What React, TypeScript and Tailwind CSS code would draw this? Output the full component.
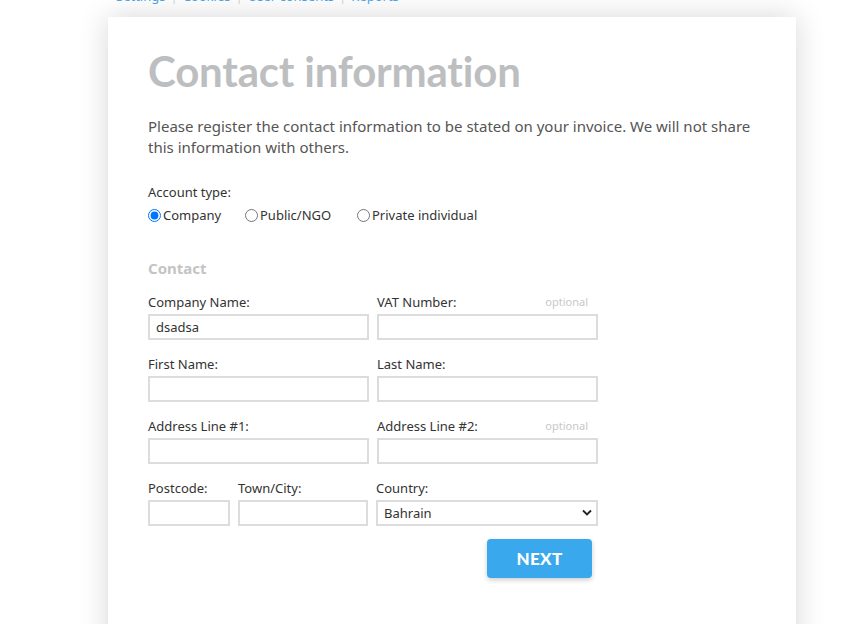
import React from "react";

const navLinks = ["Settings", "Cookies", "User consents", "Reports"];

function Field({
  label,
  optional,
  value,
  width,
}: {
  label: string;
  optional?: boolean;
  value?: string;
  width: string;
}) {
  return (
    <div className={`flex flex-col ${width}`}>
      <div className="flex items-center justify-between pr-[10px] h-[14px] leading-[14px]">
        <span className="text-[13px] text-[#333]">{label}</span>
        {optional && <span className="text-[11px] text-[#c8c8c8]">optional</span>}
      </div>
      <input
        defaultValue={value}
        className="mt-[5px] h-[26px] w-full border-2 border-[#dcdcdc] px-[6px] text-[13px] text-[#333] outline-none"
      />
    </div>
  );
}

export default function App() {
  return (
    <div className="min-h-[624px] bg-white overflow-hidden font-['Noto_Sans',sans-serif]">
      <div className="ml-[116px] -mt-[13px] flex items-center text-[13px] leading-[18px] text-[#4ba3e0]">
        {navLinks.map((link, i) => (
          <React.Fragment key={link}>
            {i > 0 && <span className="mx-[5px] text-[#cfcfcf]">|</span>}
            <span>{link}</span>
          </React.Fragment>
        ))}
      </div>

      <div className="ml-[108px] mt-[12px] w-[688px] min-h-[640px] bg-white px-[40px] pt-[28px] shadow-[0_0_28px_rgba(0,0,0,0.16)]">
        <h1 className="font-['Lato',sans-serif] text-[42px] font-bold leading-[52px] tracking-[-0.2px] text-[#bcbec0]">
          Contact information
        </h1>

        <p className="mt-[19px] w-[620px] text-[15px] leading-[21px] text-[#555]">
          Please register the contact information to be stated on your invoice. We will not share
          this information with others.
        </p>

        <div className="mt-[25px] text-[13px] text-[#333]">Account type:</div>
        <div className="mt-[3px] flex items-center text-[13px] text-[#333]">
          <label className="flex items-center w-[97px]">
            <input type="radio" name="acc" defaultChecked className="m-0 mr-[2px] h-[13px] w-[13px]" />
            Company
          </label>
          <label className="flex items-center w-[112px]">
            <input type="radio" name="acc" className="m-0 mr-[2px] h-[13px] w-[13px]" />
            Public/NGO
          </label>
          <label className="flex items-center">
            <input type="radio" name="acc" className="m-0 mr-[2px] h-[13px] w-[13px]" />
            Private individual
          </label>
        </div>

        <h2 className="mt-[32px] text-[15px] font-bold text-[#c4c4c4]">Contact</h2>

        <div className="mt-[15px] flex flex-col gap-[17px] w-[450px]">
          <div className="flex gap-[8px]">
            <Field label="Company Name:" value="dsadsa" width="w-[221px]" />
            <Field label="VAT Number:" optional width="w-[221px]" />
          </div>
          <div className="flex gap-[8px]">
            <Field label="First Name:" width="w-[221px]" />
            <Field label="Last Name:" width="w-[221px]" />
          </div>
          <div className="flex gap-[8px]">
            <Field label="Address Line #1:" width="w-[221px]" />
            <Field label="Address Line #2:" optional width="w-[221px]" />
          </div>
          <div className="flex gap-[8px]">
            <Field label="Postcode:" width="w-[82px]" />
            <Field label="Town/City:" width="w-[130px]" />
            <div className="flex flex-col w-[222px]">
              <div className="flex items-center h-[14px] leading-[14px]">
                <span className="text-[13px] text-[#333]">Country:</span>
              </div>
              <div className="relative mt-[5px]">
                <select
                  defaultValue="Bahrain"
                  className="h-[26px] w-full appearance-none border-2 border-[#dcdcdc] bg-white pl-[6px] text-[13px] text-[#333] outline-none"
                >
                  <option>Bahrain</option>
                </select>
                <svg
                  className="pointer-events-none absolute right-[6px] top-[9px]"
                  width="10"
                  height="7"
                  viewBox="0 0 10 7"
                >
                  <path d="M1 1.5 L5 5.5 L9 1.5" stroke="#222" strokeWidth="1.8" fill="none" />
                </svg>
              </div>
            </div>
          </div>
        </div>

        <div className="mt-[13px] flex w-[444px] justify-end">
          <button className="h-[39px] w-[105px] rounded-[4px] bg-[#3aa8ec] font-['Lato',sans-serif] text-[17px] font-black tracking-[0.3px] text-white shadow-[0_2px_5px_rgba(0,0,0,0.2)]">
            NEXT
          </button>
        </div>
      </div>
    </div>
  );
}
